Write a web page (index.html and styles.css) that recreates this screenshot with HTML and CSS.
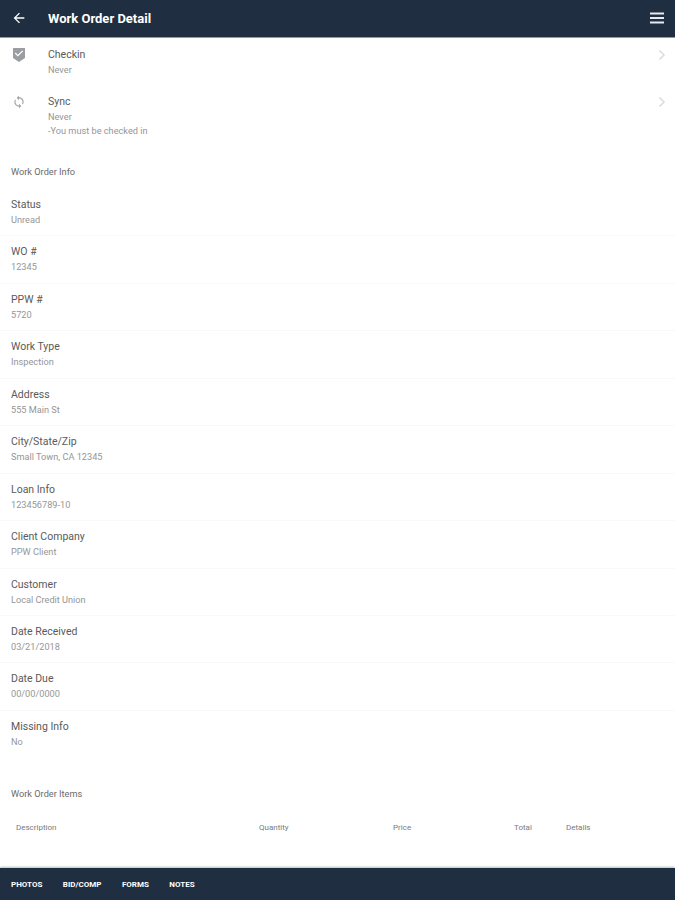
FILE: index.html
```html
<!DOCTYPE html>
<html lang="en">
<head>
    <meta charset="UTF-8">
    <meta name="viewport" content="width=device-width, initial-scale=1.0">
    <title>Work Order Detail</title>
    <link rel="stylesheet" href="styles.css">
</head>
<body>
    <header class="topbar">
        <svg class="back-icon" viewBox="0 0 24 24" fill="currentColor">
            <path d="M20 11H7.83l5.59-5.59L12 4l-8 8 8 8 1.41-1.41L7.83 13H20v-2z"/>
        </svg>
        <h1 class="topbar-title">Work Order Detail</h1>
        <svg class="menu-icon" viewBox="0 0 14 12" fill="currentColor">
            <rect y="0.5" width="14" height="2"/>
            <rect y="5" width="14" height="2"/>
            <rect y="9.5" width="14" height="2"/>
        </svg>
    </header>

    <main class="content">
        <div class="action">
            <svg class="action-icon" viewBox="0 0 14 16" fill="#9a9da1">
                <path fill-rule="evenodd" d="M1 1h12v10l-6 4-6-4V1zm2.6 4.6L2.8 6.5l3 3 5.4-5.2-.9-.9-4.5 4.3-2.2-2.1z"/>
            </svg>
            <div class="action-text">
                <div class="label">Checkin</div>
                <div class="value">Never</div>
            </div>
            <svg class="chevron" viewBox="0 0 8 12" fill="none" stroke="#dcdcdc" stroke-width="1.6">
                <path d="M1.5 1.5 6 6l-4.5 4.5"/>
            </svg>
        </div>
        <div class="action action-sync">
            <svg class="action-icon" viewBox="0 0 24 24" fill="#a4a7aa">
                <path d="M12 4V1L8 5l4 4V6c3.31 0 6 2.69 6 6 0 1.01-.25 1.97-.7 2.8l1.46 1.46C19.54 15.03 20 13.57 20 12c0-4.42-3.58-8-8-8zm0 14c-3.31 0-6-2.69-6-6 0-1.01.25-1.97.7-2.8L5.24 7.74C4.46 8.97 4 10.43 4 12c0 4.42 3.58 8 8 8v3l4-4-4-4v3z"/>
            </svg>
            <div class="action-text">
                <div class="label">Sync</div>
                <div class="value">Never</div>
                <div class="value value-note">-You must be checked in</div>
            </div>
            <svg class="chevron" viewBox="0 0 8 12" fill="none" stroke="#dcdcdc" stroke-width="1.6">
                <path d="M1.5 1.5 6 6l-4.5 4.5"/>
            </svg>
        </div>

        <h2 class="section-title">Work Order Info</h2>

        <div class="info-list">
            <div class="info-row"><div class="label">Status</div><div class="value">Unread</div></div>
            <div class="info-row"><div class="label">WO #</div><div class="value">12345</div></div>
            <div class="info-row"><div class="label">PPW #</div><div class="value">5720</div></div>
            <div class="info-row"><div class="label">Work Type</div><div class="value">Inspection</div></div>
            <div class="info-row"><div class="label">Address</div><div class="value">555 Main St</div></div>
            <div class="info-row"><div class="label">City/State/Zip</div><div class="value">Small Town, CA 12345</div></div>
            <div class="info-row"><div class="label">Loan Info</div><div class="value">123456789-10</div></div>
            <div class="info-row"><div class="label">Client Company</div><div class="value">PPW Client</div></div>
            <div class="info-row"><div class="label">Customer</div><div class="value">Local Credit Union</div></div>
            <div class="info-row"><div class="label">Date Received</div><div class="value">03/21/2018</div></div>
            <div class="info-row"><div class="label">Date Due</div><div class="value">00/00/0000</div></div>
            <div class="info-row"><div class="label">Missing Info</div><div class="value">No</div></div>
        </div>

        <h2 class="section-title section-items">Work Order Items</h2>

        <div class="items-head">
            <span>Description</span>
            <span>Quantity</span>
            <span>Price</span>
            <span>Total</span>
            <span>Details</span>
        </div>
    </main>

    <footer class="tabbar">
        <span>PHOTOS</span>
        <span>BID/COMP</span>
        <span>FORMS</span>
        <span>NOTES</span>
    </footer>
</body>
</html>
```

FILE: styles.css
```css
* {
    margin: 0;
    padding: 0;
    box-sizing: border-box;
}

body {
    font-family: Roboto, "Liberation Sans", sans-serif;
    background: #fff;
    color: #444;
    height: 900px;
    display: flex;
    flex-direction: column;
    overflow: hidden;
}

.topbar {
    height: 38px;
    flex: none;
    display: flex;
    align-items: center;
    padding: 0 11px 1px 11px;
    background: #1f2f41;
    border-bottom: 1px solid #8d99a6;
    color: #fff;
}

.back-icon {
    width: 16px;
    height: 16px;
}

.topbar-title {
    margin-left: 21px;
    font-size: 13px;
    font-weight: 700;
    flex: 1;
}

.menu-icon {
    width: 14px;
    height: 12px;
    color: #e8e8f0;
}

.content {
    flex: 1;
}

.action {
    display: flex;
    height: 47px;
    padding: 9px 9px 0 12px;
}

.action-sync {
    height: 81px;
}

.action-icon {
    width: 14px;
    height: 16px;
    flex: none;
}

.action-text {
    flex: 1;
    margin-left: 22px;
}

.chevron {
    width: 8px;
    height: 12px;
    margin-top: 2px;
}

.label {
    font-size: 10.5px;
    line-height: 15px;
    color: #5a5a5a;
}

.value {
    font-size: 9.2px;
    line-height: 14px;
    margin-top: 1px;
    color: #969696;
}

.value-note {
    margin-top: 0;
}

.section-title {
    font-size: 9.2px;
    font-weight: 400;
    line-height: 12px;
    padding-left: 11px;
    color: #6a6a6a;
}

.info-list {
    margin-top: 11px;
}

.info-row {
    height: 47.45px;
    padding: 8px 11px 0;
    border-bottom: 1px solid #f8f8f8;
}

.info-row:last-child {
    border-bottom: none;
}

.section-items {
    margin-top: 30px;
}

.items-head {
    display: grid;
    grid-template-columns: 243px 134px 121px 52px 1fr;
    margin-top: 23px;
    padding-left: 16px;
    font-size: 8px;
    line-height: 10px;
    color: #7a7a7a;
}

.tabbar {
    height: 32px;
    flex: none;
    display: flex;
    align-items: center;
    gap: 20.5px;
    padding: 0 11px;
    background: #1f2f41;
    border-top: 1px solid #16303c;
    box-shadow: 0 -1px 2px #bbb;
    color: #fff;
    font-size: 8px;
    font-weight: 700;
}
```
